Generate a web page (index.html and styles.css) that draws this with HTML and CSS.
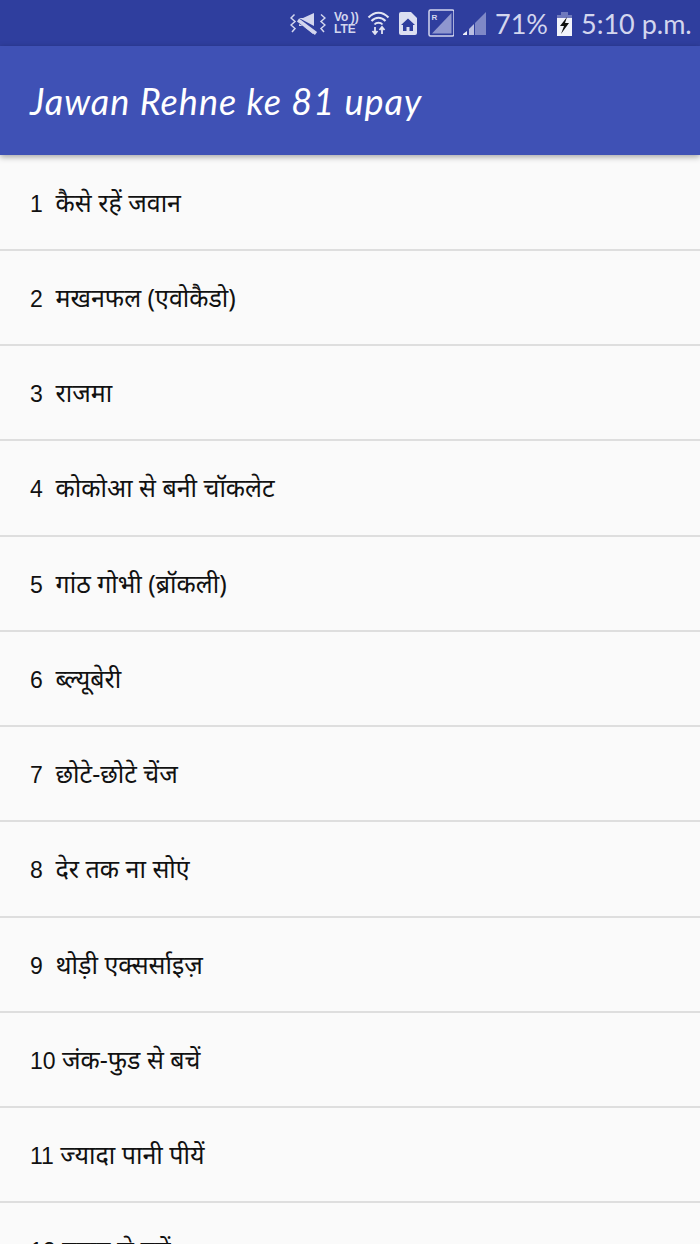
FILE: index.html
```html
<!DOCTYPE html>
<html lang="hi">
<head>
<meta charset="utf-8">
<title>Jawan Rehne ke 81 upay</title>
<link rel="stylesheet" href="styles.css">
</head>
<body>
<div class="status">
  <svg class="ic" width="36" height="24" viewBox="0 0 36 24"><g fill="none" stroke="#d3d6ee" stroke-width="1.500"><path d="M4.500 3.500L1 7l4 3.500L1 14l4 3.500L2 21"/><path d="M31 3.500L35 7l-4 3.500 4 3.500-4 3.500 3 3.500"/></g><path d="M9 7h4l11-5v13z" fill="#d3d6ee"/><path d="M9 13v2h4l10 8 1-2z" fill="#d3d6ee"/><path d="M8 9l18 13.500" stroke="#d3d6ee" stroke-width="3.500"/></svg>
  <div class="volte"><span>Vo&#8201;))</span><span>LTE</span></div>
  <svg class="ic" width="25" height="24" viewBox="0 0 25 24"><g fill="none" stroke="#e2e4f3" stroke-width="2"><path d="M3.500 6.500c6-6.500 14-6.500 20 0"/><path d="M6.500 10c4-4.500 10-4.500 14 0"/><path d="M9.500 13.500c2-2.500 6-2.500 8 0"/></g><path d="M10 16v7M7.500 20l2.500 3 2.500-3M17 23v-7M14.500 19l2.500-3 2.500 3" stroke="#e2e4f3" stroke-width="1.800" fill="none"/></svg>
  <svg class="ic" width="19" height="24" viewBox="0 0 19 24"><path d="M3 1h10l6 6v15a2 2 0 0 1-2 2H3a2 2 0 0 1-2-2V3a2 2 0 0 1 2-2z" fill="#dcdff1"/><path d="M10 7.500l7 6.500h-2v6h-3.500v-4h-3v4H5v-6H3z" fill="#2f3e9e"/></svg>
  <svg class="ic" width="29" height="28" viewBox="0 0 29 28"><rect x="4" y="1" width="25" height="26" rx="1.500" fill="none" stroke="#d3d6ee" stroke-width="1.500"/><path d="M7 24.500L26.500 4v20.500z" fill="#8f97cf"/><text x="6.500" y="11" class="roam">R</text></svg>
  <svg class="ic" width="25" height="24" viewBox="0 0 25 24"><path d="M13 12L24 1v23H13z" fill="#7f88c7"/><path d="M7 18l5-5v11H7z" fill="#b9bee2"/><path d="M1 24v-1l4-3v4z" fill="#eef0f9"/></svg>
  <span class="pct">71%</span>
  <svg class="ic" width="17" height="25" viewBox="0 0 17 25"><rect x="1" y="5" width="15" height="20" fill="#f2f3fa"/><path d="M5 1h7v3h4v3H1V4h4z" fill="#6f79bd"/><path d="M11 6L4 15h4l-3 8 8-11H9z" fill="#111"/></svg>
  <span class="time">5:10 p.m.</span>
</div>
<header class="bar"><h1 class="title">Jawan Rehne ke 81 upay</h1></header>
<ul class="list">
  <li class="row"><span class="num">1&nbsp; </span>कैसे रहें जवान</li>
  <li class="row"><span class="num">2&nbsp; </span>मखनफल (एवोकैडो)</li>
  <li class="row"><span class="num">3&nbsp; </span>राजमा</li>
  <li class="row"><span class="num">4&nbsp; </span>कोकोआ से बनी चॉकलेट</li>
  <li class="row"><span class="num">5&nbsp; </span>गांठ गोभी (ब्रॉकली)</li>
  <li class="row"><span class="num">6&nbsp; </span>ब्ल्यूबेरी</li>
  <li class="row"><span class="num">7&nbsp; </span>छोटे-छोटे चेंज</li>
  <li class="row"><span class="num">8&nbsp; </span>देर तक ना सोएं</li>
  <li class="row"><span class="num">9&nbsp; </span>थोड़ी एक्सर्साइज़</li>
  <li class="row"><span class="num">10 </span>जंक-फुड से बचें</li>
  <li class="row"><span class="num">11 </span>ज्यादा पानी पीयें</li>
  <li class="row"><span class="num">12 </span>तनाव से बचें</li>
</ul>
</body>
</html>
```
FILE: styles.css
```css
html, body { margin: 0; padding: 0; }
body {
  width: 700px;
  height: 1244px;
  overflow: hidden;
  background: #fafafa;
  font-family: "Noto Sans", "Liberation Sans", sans-serif;
}
.status {
  height: 46px;
  background: #2f3e9e;
  display: flex;
  align-items: center;
  justify-content: flex-end;
  gap: 8px;
  padding-right: 10px;
  color: #d3d6ee;
  box-sizing: border-box;
}
.ic { display: block; flex: none; }
.volte {
  width: 23px;
  display: flex;
  flex-direction: column;
  font: bold 12px/12px "Liberation Sans", sans-serif;
  white-space: nowrap;
}
.roam { font: bold 8px "Liberation Sans", sans-serif; fill: #d3d6ee; }
.pct, .time { font: 27px/1 "Lato", sans-serif; white-space: nowrap; text-align: right; }
.pct { width: 53px; }
.time { width: 109px; }
.bar {
  height: 109px;
  background: #3f51b5;
  display: flex;
  align-items: center;
  padding-left: 30px;
  box-shadow: 0 2px 6px rgba(0,0,0,.35);
  position: relative;
}
.title {
  margin: 0;
  font: italic 400 36px/1 "Lato", sans-serif;
  color: #fff;
  letter-spacing: 1px;
}
.list { list-style: none; margin: 0; padding: 0.5px 0 0; }
.row {
  height: 95.25px;
  box-sizing: border-box;
  border-bottom: 2px solid #dedede;
  padding: 28px 0 0 30px;
  font-size: 25px;
  line-height: 36px;
  color: #111;
  white-space: nowrap;
}
.num { font: 23px "Liberation Sans", sans-serif; }
```
